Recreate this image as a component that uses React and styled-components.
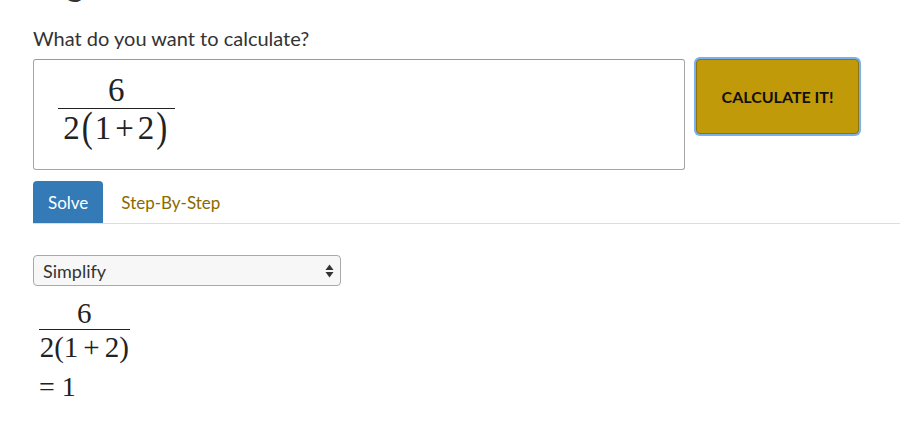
import React from 'react';
import styled, {createGlobalStyle} from 'styled-components';

const Global = createGlobalStyle`
  html, body {
    margin: 0;
    padding: 0;
    background: #fff;
    overflow: hidden;
  }
  body {
    font-family: Lato, "Open Sans", sans-serif;
    color: #333;
  }
`;

const Page = styled.div`
  width: 900px;
  height: 429px;
  padding-left: 33px;
  box-sizing: border-box;
  overflow: hidden;
`;

// page title, scrolled almost out of view: only a descender peeks in
const Heading = styled.h1`
  margin: -42px 0 0 0;
  font-size: 36px;
  font-weight: 400;
  line-height: 48px;
  color: #333;
`;

const Label = styled.div`
  margin-top: 20px;
  font-size: 20px;
  line-height: 24px;
`;

const InputRow = styled.div`
  display: flex;
  align-items: flex-start;
  gap: 11px;
  margin-top: 9px;
`;

const MathBox = styled.div`
  width: 652px;
  height: 111px;
  box-sizing: border-box;
  border: 1px solid #a5a5a5;
  border-top-color: #999;
  border-radius: 3px;
  padding: 14px 0 0 24px;
`;

const Fraction = styled.div`
  display: inline-flex;
  flex-direction: column;
  align-items: center;
  font-family: "Liberation Serif", "Times New Roman", serif;
  font-size: ${p => p.$size}px;
  line-height: 1;
  color: #222;
`;

const Num = styled.span`
  padding: 0 ${p => p.$pad}px 1px;
`;

const Bar = styled.span`
  align-self: stretch;
  height: 1px;
  background: #222;
`;

const Den = styled.span`
  padding-top: 3px;
  white-space: nowrap;
`;

const Paren = styled.span`
  display: inline-block;
  margin: 0 2px;
  transform: scaleY(${p => p.$scale});
  transform-origin: 50% 60%;
`;

const Op = styled.span`
  margin: 0 ${p => p.$gap}px;
`;

const CalcButton = styled.button`
  width: 163px;
  height: 75px;
  box-sizing: border-box;
  background: #c19a09;
  border: 1px solid #8d7310;
  border-radius: 4px;
  box-shadow: 0 0 0 2px #79b0ee;
  font-family: Lato, "Open Sans", sans-serif;
  font-weight: 700;
  font-size: 16px;
  color: #111;
  cursor: pointer;
`;

const Tabs = styled.div`
  display: flex;
  align-items: center;
  margin-top: 11px;
  border-bottom: 1px solid #ddd;
`;

const Tab = styled.div`
  height: 42px;
  display: flex;
  align-items: center;
  padding: 0 ${p => (p.$active ? 15 : 18)}px;
  border-radius: 4px 4px 0 0;
  font-size: 17px;
  background: ${p => (p.$active ? '#337ab7' : 'transparent')};
  color: ${p => (p.$active ? '#fff' : '#8a6a00')};
`;

const Select = styled.div`
  margin-top: 31px;
  width: 308px;
  height: 31px;
  box-sizing: border-box;
  display: flex;
  align-items: center;
  justify-content: space-between;
  padding: 0 6px 0 9px;
  border: 1px solid #a9a9a9;
  border-radius: 4px;
  background: #f7f7f7;
  font-size: 18px;
  color: #333;
`;

const Result = styled.div`
  margin-top: 13px;
  padding-left: 6px;
  display: flex;
  flex-direction: column;
  align-items: flex-start;
`;

const Equals = styled.div`
  margin-top: 9px;
  font-family: "Liberation Serif", "Times New Roman", serif;
  font-size: 28px;
  color: #222;
`;

function Arrows() {
  return (
    <svg width="9" height="14" viewBox="0 0 9 14">
      <path d="M4.5 0.5 L8.5 6 L0.5 6 Z" fill="#333"/>
      <path d="M4.5 13.5 L8.5 8 L0.5 8 Z" fill="#333"/>
    </svg>
  );
}

export default function App() {
  return (
    <Page>
      <Global/>
      <Heading>Algebra Calculator</Heading>
      <Label>What do you want to calculate?</Label>
      <InputRow>
        <MathBox>
          <Fraction $size={33}>
            <Num $pad={50}>6</Num>
            <Bar/>
            <Den>2<Paren $scale={1.3}>(</Paren>1<Op $gap={4}>+</Op>2<Paren $scale={1.3}>)</Paren></Den>
          </Fraction>
        </MathBox>
        <CalcButton>CALCULATE IT!</CalcButton>
      </InputRow>
      <Tabs>
        <Tab $active>Solve</Tab>
        <Tab>Step-By-Step</Tab>
      </Tabs>
      <Select>
        <span>Simplify</span>
        <Arrows/>
      </Select>
      <Result>
        <Fraction $size={29}>
          <Num $pad={38}>6</Num>
          <Bar/>
          <Den>2(1<Op $gap={5}>+</Op>2)</Den>
        </Fraction>
        <Equals>= 1</Equals>
      </Result>
    </Page>
  );
}
